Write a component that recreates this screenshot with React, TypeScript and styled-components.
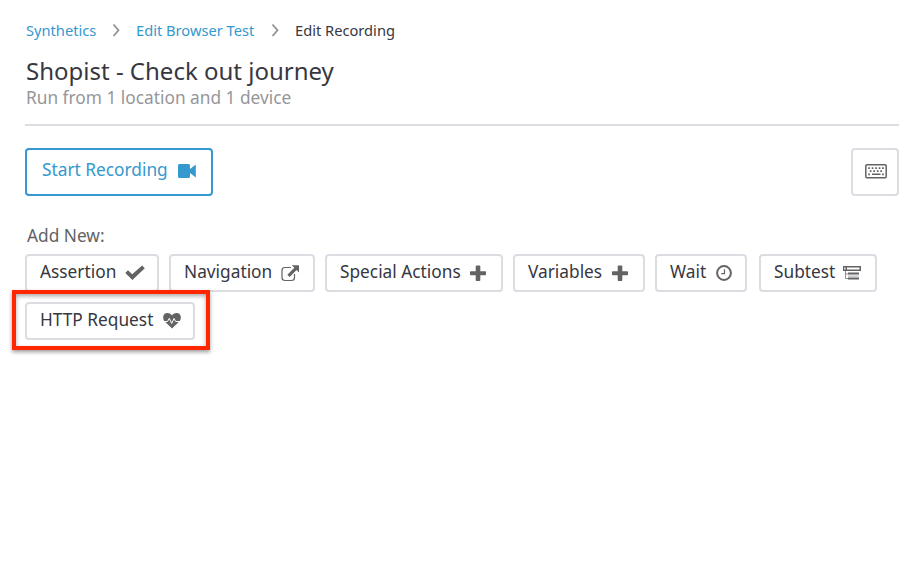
import React from "react";
import styled, { createGlobalStyle } from "styled-components";

const GlobalStyle = createGlobalStyle`
  *, *::before, *::after { box-sizing: border-box; }
  body {
    margin: 0;
    background: #fff;
    color: #37373f;
    font-family: "Noto Sans", "Open Sans", sans-serif;
  }
  button { font-family: inherit; margin: 0; background: #fff; cursor: pointer; }
`;

const Page = styled.main`
  width: 915px;
  height: 578px;
  padding: 19px 16px 0 25px;
  overflow: hidden;
`;

const Breadcrumbs = styled.nav`
  display: flex;
  align-items: center;
  height: 22px;
  padding-left: 1px;
  font-size: 14.67px;
  line-height: 22px;
  white-space: nowrap;
`;

const Crumb = styled.span<{ $width: number; $link?: boolean }>`
  width: ${(p) => p.$width}px;
  color: ${(p) => (p.$link ? "#3598ce" : "#37373f")};
`;

const Chevron = styled.svg`
  width: 40px;
  height: 14px;
  flex: none;
  fill: none;
  stroke: #8d8d92;
  stroke-width: 1.7;
`;

const Header = styled.header`
  height: 85px;
  padding: 14px 0 0 1px;
  border-bottom: 2px solid #dcdce2;
  white-space: nowrap;
`;

const Title = styled.h1`
  margin: 0;
  font-size: 24px;
  font-weight: 400;
  line-height: 32px;
`;

const Subtitle = styled.p`
  margin: 0;
  color: #96969a;
  font-size: 17.3px;
  line-height: 22px;
`;

const Toolbar = styled.div`
  display: flex;
  justify-content: space-between;
  margin-top: 22px;
`;

const RecordButton = styled.button`
  display: flex;
  align-items: center;
  justify-content: space-between;
  width: 188px;
  height: 48px;
  padding: 0 14px 2px 15px;
  border: 2px solid #3598ce;
  border-radius: 4px;
  color: #3598ce;
  font-size: 17.3px;
  white-space: nowrap;
`;

const KeyboardButton = styled.button`
  display: flex;
  align-items: center;
  justify-content: center;
  width: 48px;
  height: 48px;
  padding: 0 0 2px 2px;
  border: 2px solid #dcdce2;
  border-radius: 4px;
  color: #636366;
`;

const SectionLabel = styled.div`
  margin-top: 28px;
  padding-left: 2px;
  height: 24px;
  color: #636366;
  font-size: 17.3px;
  line-height: 24px;
`;

const StepList = styled.div`
  display: flex;
  flex-wrap: wrap;
  gap: 10px;
  margin-top: 6px;
`;

const StepButton = styled.button<{ $width: number; $end: number }>`
  display: flex;
  align-items: center;
  justify-content: space-between;
  width: ${(p) => p.$width}px;
  height: 38px;
  padding: 0 ${(p) => p.$end}px 0 13px;
  border: 2px solid #dcdce2;
  border-radius: 4px;
  color: #37373f;
  font-size: 17.3px;
  white-space: nowrap;

  &:nth-child(6) { margin-left: 2px; }
`;

const Label = styled.span`
  line-height: 24px;
  margin-top: -3px;
`;

const Icon = styled.svg`
  width: 20px;
  height: 20px;
  flex: none;
  color: #636366;
  fill: currentColor;
`;

const Highlighted = styled.div`
  position: relative;

  &::after {
    content: "";
    position: absolute;
    inset: -12px -15px -10px -13px;
    border: 4px solid #ff2600;
    box-shadow: 0 2px 4px rgba(0, 0, 0, 0.4), inset 0 2px 4px rgba(0, 0, 0, 0.35);
    pointer-events: none;
  }
`;

const VideoIcon = styled.svg`
  width: 20px;
  height: 16px;
  flex: none;
`;

const KeyboardIcon = styled.svg`
  width: 22px;
  height: 16px;
  fill: currentColor;
`;

const Separator = () => (
  <Chevron viewBox="0 0 40 14">
    <path d="M17.5 1.5 L22.5 7.3 L17.5 13" />
  </Chevron>
);

const Check = () => (
  <Icon viewBox="0 0 20 20"><path d="M.3 9.900 3 7.300 7.200 11.200 17.100 2.400 19.800 5.200 7.400 17Z" /></Icon>
);

const External = () => (
  <Icon viewBox="0 0 20 20">
    <path d="M11 4.500H5Q2 4.500 2 7.500V14.500Q2 17.500 5 17.500H11.500Q14.500 17.500 14.500 14.500V11" fill="none" stroke="currentColor" strokeWidth="1.200" />
    <path d="M11.800 2.200H19V9.400L16.600 7 9.600 14 7.400 11.800 14.300 4.800Z" />
  </Icon>
);

const Plus = () => (
  <Icon viewBox="0 0 20 20">
    <path d="M8.500 2.500h3q.8 0 .8.8v4.900h4.900q.8 0 .8.8v2.500q0 .8-.8.800h-4.900v4.900q0 .8-.8.800h-3q-.8 0-.8-.8v-4.900H2.800q-.8 0-.8-.8V9q0-.8.8-.8h4.900V3.300q0-.8.8-.8Z" />
  </Icon>
);

const Clock = () => (
  <Icon viewBox="0 0 20 20">
    <circle cx="10" cy="10" r="6.900" fill="none" stroke="currentColor" strokeWidth="2" />
    <path d="M10.500 6.200v4.400H7.300" fill="none" stroke="currentColor" strokeWidth="1.200" />
  </Icon>
);

const Subtest = () => (
  <Icon viewBox="0 0 20 20">
    <path d="M1 3h18v5H1ZM2.200 4.600v1.800h1.300V4.600ZM5 4.600v1.800h12.500V4.600Z" fillRule="evenodd" />
    <path d="M3.500 8v7.500H6M3.500 11H6" fill="none" stroke="currentColor" strokeWidth=".7" />
    <path d="M6 9.500h11v2H6ZM6 14.500h11v2H6Z" />
    <path d="M6 12.300h11M6 13.500h11" fill="none" stroke="currentColor" strokeWidth=".3" />
  </Icon>
);

const Heartbeat = () => (
  <Icon viewBox="0 0 20 20">
    <path d="M10 17.600 3 10.800C-.2 7.500.8 2 5.500 2 7.500 2 9.200 3.300 10 4.500 10.800 3.300 12.500 2 14.500 2 19.200 2 20.200 7.500 17 10.800Z" />
    <path d="M1 10.500H5.500L7.300 7.300 9.700 12.500 12 7.500 13.700 10.500H19" fill="none" stroke="#fff" strokeWidth="1" />
  </Icon>
);

const steps = [
  { label: "Assertion", width: 134, end: 12, icon: <Check /> },
  { label: "Navigation", width: 146, end: 13, icon: <External /> },
  { label: "Special Actions", width: 178, end: 13, icon: <Plus /> },
  { label: "Variables", width: 132, end: 13, icon: <Plus /> },
  { label: "Wait", width: 92, end: 11, icon: <Clock /> },
  { label: "Subtest", width: 118, end: 13, icon: <Subtest /> },
];

export default function App() {
  return (
    <Page>
      <GlobalStyle />
      <Breadcrumbs>
        <Crumb $width={70} $link>Synthetics</Crumb>
        <Separator />
        <Crumb $width={119} $link>Edit Browser Test</Crumb>
        <Separator />
        <Crumb $width={101}>Edit Recording</Crumb>
      </Breadcrumbs>
      <Header>
        <Title>Shopist - Check out journey</Title>
        <Subtitle>Run from 1 location and 1 device</Subtitle>
      </Header>
      <Toolbar>
        <RecordButton>
          <Label>Start Recording</Label>
          <VideoIcon viewBox="0 0 20 16">
            <path fill="currentColor" d="M2.500 1H11.500q1.500 0 1.500 1.500V6L18.800 1.500V14.500L13 10v3.500q0 1.500-1.500 1.500H2.500q-1.500 0-1.500-1.500V2.500q0-1.500 1.500-1.500Z" />
          </VideoIcon>
        </RecordButton>
        <KeyboardButton aria-label="Keyboard shortcuts">
          <KeyboardIcon viewBox="0 0 22 16">
            <rect x=".8" y="1.700" width="20.400" height="13" rx="1" fill="none" stroke="currentColor" strokeWidth="1.500" />
            <path d="M3.200 4.200h1.700v1.700H3.200ZM6.700 4.200h1.700v1.700H6.700ZM10.200 4.200h1.700v1.700h-1.700ZM13.700 4.200h1.700v1.700h-1.700ZM17.100 4.200h1.700v1.700h-1.700ZM4.800 7.300h1.700V9H4.800ZM8.300 7.300H10V9H8.300ZM11.800 7.300h1.700V9h-1.700ZM15.300 7.300H17V9h-1.700ZM3.200 10.500h1.700v1.700H3.200ZM7 10.500h8.500v1.600H7ZM17.100 10.500h1.700v1.700h-1.700Z" />
          </KeyboardIcon>
        </KeyboardButton>
      </Toolbar>
      <SectionLabel>Add New:</SectionLabel>
      <StepList>
        {steps.map((s) => (
          <StepButton key={s.label} $width={s.width} $end={s.end}>
            <Label>{s.label}</Label>
            {s.icon}
          </StepButton>
        ))}
        <Highlighted>
          <StepButton $width={170} $end={11}>
            <Label>HTTP Request</Label>
            <Heartbeat />
          </StepButton>
        </Highlighted>
      </StepList>
    </Page>
  );
}
